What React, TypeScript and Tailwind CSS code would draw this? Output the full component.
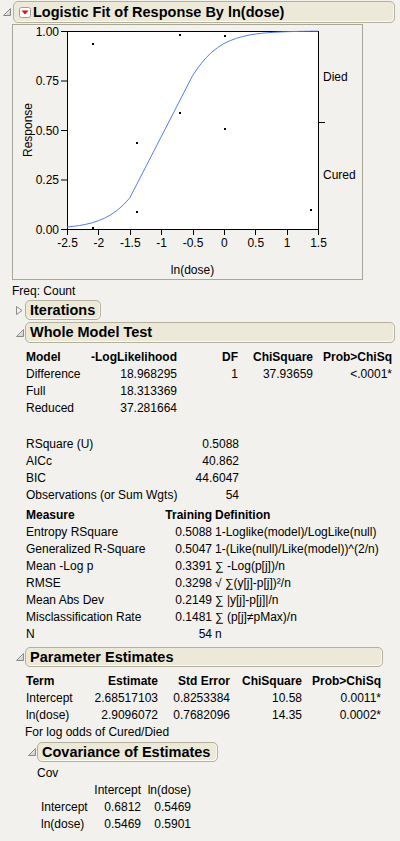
import React from 'react';

const FONT = "font-['Liberation_Sans',Arial,sans-serif]";

// plot geometry, in svg coords (page minus 13,25)
const PX = 54;
const PY = 6;
const PW = 251;
const PH = 198;
const xs = (v: number) => PX + (v + 2.5) * (PW / 4);
const ys = (p: number) => PY + PH - p * PH;

const prob = (v: number) => 1 / (1 + Math.exp(-(2.68517103 + 2.9096072 * v)));

function curvePath() {
  const pts: string[] = [];
  for (let v = -2.5; v <= -1.5 + 1e-9; v += 0.1) pts.push(`${xs(v).toFixed(1)},${ys(prob(v)).toFixed(1)}`);
  for (let v = -0.5; v <= 1.5 + 1e-9; v += 0.1) pts.push(`${xs(v).toFixed(1)},${ys(prob(v)).toFixed(1)}`);
  return 'M' + pts.join(' L');
}

const points: [number, number][] = [
  [80, 19],
  [167, 10],
  [212, 11],
  [167, 88],
  [212, 104],
  [124, 118],
  [124, 187],
  [80, 203],
  [298, 185],
];

function OpenTri() {
  return (
    <svg width="8" height="8" viewBox="0 0 8 8" className="block">
      <defs>
        <linearGradient id="tg" x1="0" y1="0" x2="1" y2="1">
          <stop offset="0" stopColor="#ffffff" />
          <stop offset="1" stopColor="#c8c8c8" />
        </linearGradient>
      </defs>
      <polygon points="7.5,0.5 7.5,7.5 0.5,7.5" fill="url(#tg)" stroke="#8a8a8a" strokeWidth="1" />
    </svg>
  );
}

function ClosedTri() {
  return (
    <svg width="7" height="9" viewBox="0 0 7 9" className="block">
      <polygon points="0.5,0.5 6,4.5 0.5,8.5" fill="#f4f4f4" stroke="#8a8a8a" strokeWidth="1" />
    </svg>
  );
}

function RedMenu() {
  return (
    <svg width="12" height="11" viewBox="0 0 12 11" className="block">
      <rect x="0.5" y="0.5" width="11" height="10" rx="2" fill="#ffffff" stroke="#a19f92" />
      <polygon points="2.5,3.5 9.5,3.5 6,7.5" fill="#dd1010" />
    </svg>
  );
}

const box =
  'flex items-center rounded-[5px] border border-[#b3b09e] bg-[#ece9d8] shadow-[inset_-1px_-1px_0_#faf9f3] text-[14.5px] font-bold leading-none text-black';

function Chart() {
  const xt = [-2.5, -2, -1.5, -1, -0.5, 0, 0.5, 1, 1.5];
  const yt = [
    [0, '0.00'],
    [0.25, '0.25'],
    [0.5, '0.50'],
    [0.75, '0.75'],
    [1, '1.00'],
  ] as const;
  return (
    <svg width="349" height="254" className="block" fontFamily="'Liberation Sans', Arial, sans-serif" fontSize="12">
      <rect x={PX + 0.5} y={PY + 0.5} width={PW} height={PH} fill="#ffffff" stroke="#000000" />
      {yt.map(([p, l]) => (
        <g key={l}>
          <line x1={48} x2={PX} y1={ys(p) + 0.5} y2={ys(p) + 0.5} stroke="#000" />
          <text x={46} y={ys(p) + 4.5} textAnchor="end" fill="#000">
            {l}
          </text>
        </g>
      ))}
      {xt.map((v) => (
        <g key={v}>
          <line x1={Math.round(xs(v)) + 0.5} x2={Math.round(xs(v)) + 0.5} y1={PY + PH} y2={PY + PH + 6} stroke="#000" />
          <text x={xs(v) + 0.5} y={222} textAnchor="middle" fill="#000">
            {String(v)}
          </text>
        </g>
      ))}
      <text x={179.5} y={249} textAnchor="middle" fill="#000">
        ln(dose)
      </text>
      <text transform="translate(19 105) rotate(-90)" textAnchor="middle" fill="#000">
        Response
      </text>
      <line x1={PX + PW} x2={PX + PW + 7} y1={97.5} y2={97.5} stroke="#000" />
      <text x={310} y={56} fill="#000">
        Died
      </text>
      <text x={310} y={154} fill="#000">
        Cured
      </text>
      <path d={curvePath()} fill="none" stroke="#4f80f2" strokeWidth="1" />
      {points.map(([x, y], i) => (
        <rect key={i} x={x - 1} y={y - 1} width="2" height="2" fill="#000" />
      ))}
    </svg>
  );
}

export default function App() {
  return (
    <div className={`min-h-screen w-full whitespace-nowrap bg-[#f2f1ed] pt-[1px] text-[12px] leading-[17px] text-black ${FONT}`}>
      {/* title */}
      <div className="flex items-center">
        <div className="w-[13px] pl-[3px]">
          <OpenTri />
        </div>
        <div className={`${box} h-[22px] w-[382px] pl-[5px]`}>
          <RedMenu />
          <span className="ml-[2px]">Logistic Fit of Response By ln(dose)</span>
        </div>
      </div>

      {/* graph frame */}
      <div className="ml-[12px] mt-[1px] h-[256px] w-[351px] border border-[#a9a796]">
        <Chart />
      </div>

      <div className="mt-[3px] pl-[12px]">Freq: Count</div>

      {/* iterations */}
      <div className="flex items-center">
        <div className="w-[25px] pl-[16px]">
          <ClosedTri />
        </div>
        <div className={`${box} h-[20px] w-[76px] px-[4px]`}>Iterations</div>
      </div>

      {/* whole model test */}
      <div className="mt-[2px] flex items-center">
        <div className="w-[25px] pl-[16px]">
          <OpenTri />
        </div>
        <div className={`${box} h-[21px] w-[370px] px-[4px]`}>Whole Model Test</div>
      </div>

      <div className="ml-[26px] mt-[6px] grid grid-cols-[65px_86px_61px_75px_79px]">
        <div className="font-bold">Model</div>
        <div className="text-right font-bold">-LogLikelihood</div>
        <div className="text-right font-bold">DF</div>
        <div className="text-right font-bold">ChiSquare</div>
        <div className="text-right font-bold">Prob&gt;ChiSq</div>
        <div>Difference</div>
        <div className="text-right">18.968295</div>
        <div className="text-right">1</div>
        <div className="text-right">37.93659</div>
        <div className="text-right">&lt;.0001*</div>
        <div>Full</div>
        <div className="text-right">18.313369</div>
        <div />
        <div />
        <div />
        <div>Reduced</div>
        <div className="text-right">37.281664</div>
        <div />
        <div />
        <div />
      </div>

      <div className="ml-[26px] mt-[19px] grid grid-cols-[160px_53px]">
        <div>RSquare (U)</div>
        <div className="text-right">0.5088</div>
        <div>AICc</div>
        <div className="text-right">40.862</div>
        <div>BIC</div>
        <div className="text-right">44.6047</div>
        <div>Observations (or Sum Wgts)</div>
        <div className="text-right">54</div>
      </div>

      <div className="ml-[26px] mt-[3px] grid grid-cols-[135px_51px_auto]">
        <div className="font-bold">Measure</div>
        <div className="text-right font-bold">Training</div>
        <div className="pl-[3px] font-bold">Definition</div>
        {[
          ['Entropy RSquare', '0.5088', '1-Loglike(model)/LogLike(null)'],
          ['Generalized R-Square', '0.5047', '1-(Like(null)/Like(model))^(2/n)'],
          ['Mean -Log p', '0.3391', '∑ -Log(p[j])/n'],
          ['RMSE', '0.3298', '√ ∑(y[j]-p[j])²/n'],
          ['Mean Abs Dev', '0.2149', '∑ |y[j]-p[j]|/n'],
          ['Misclassification Rate', '0.1481', '∑ (p[j]≠pMax)/n'],
          ['N', '54', 'n'],
        ].map(([a, b, c]) => (
          <React.Fragment key={a}>
            <div>{a}</div>
            <div className="text-right">{b}</div>
            <div className="pl-[3px]">{c}</div>
          </React.Fragment>
        ))}
      </div>

      {/* parameter estimates */}
      <div className="mt-[4px] flex items-center">
        <div className="w-[25px] pl-[16px]">
          <OpenTri />
        </div>
        <div className={`${box} h-[20px] w-[358px] px-[4px]`}>Parameter Estimates</div>
      </div>

      <div className="ml-[26px] mt-[6px] grid grid-cols-[64px_68px_72px_72px_79px]">
        <div className="font-bold">Term</div>
        <div className="text-right font-bold">Estimate</div>
        <div className="text-right font-bold">Std Error</div>
        <div className="text-right font-bold">ChiSquare</div>
        <div className="text-right font-bold">Prob&gt;ChiSq</div>
        <div>Intercept</div>
        <div className="text-right">2.68517103</div>
        <div className="text-right">0.8253384</div>
        <div className="text-right">10.58</div>
        <div className="text-right">0.0011*</div>
        <div>ln(dose)</div>
        <div className="text-right">2.9096072</div>
        <div className="text-right">0.7682096</div>
        <div className="text-right">14.35</div>
        <div className="text-right">0.0002*</div>
      </div>
      <div className="pl-[25px]">For log odds of Cured/Died</div>

      {/* covariance */}
      <div className="mt-[1px] flex items-center">
        <div className="w-[37px] pl-[28px]">
          <OpenTri />
        </div>
        <div className={`${box} h-[20px] w-[181px] px-[4px]`}>Covariance of Estimates</div>
      </div>
      <div className="mt-[3px] pl-[37px]">Cov</div>
      <div className="ml-[41px] grid grid-cols-[52px_48px_50px]">
        <div />
        <div className="text-right">Intercept</div>
        <div className="text-right">ln(dose)</div>
        <div>Intercept</div>
        <div className="text-right">0.6812</div>
        <div className="text-right">0.5469</div>
        <div>ln(dose)</div>
        <div className="text-right">0.5469</div>
        <div className="text-right">0.5901</div>
      </div>
    </div>
  );
}
